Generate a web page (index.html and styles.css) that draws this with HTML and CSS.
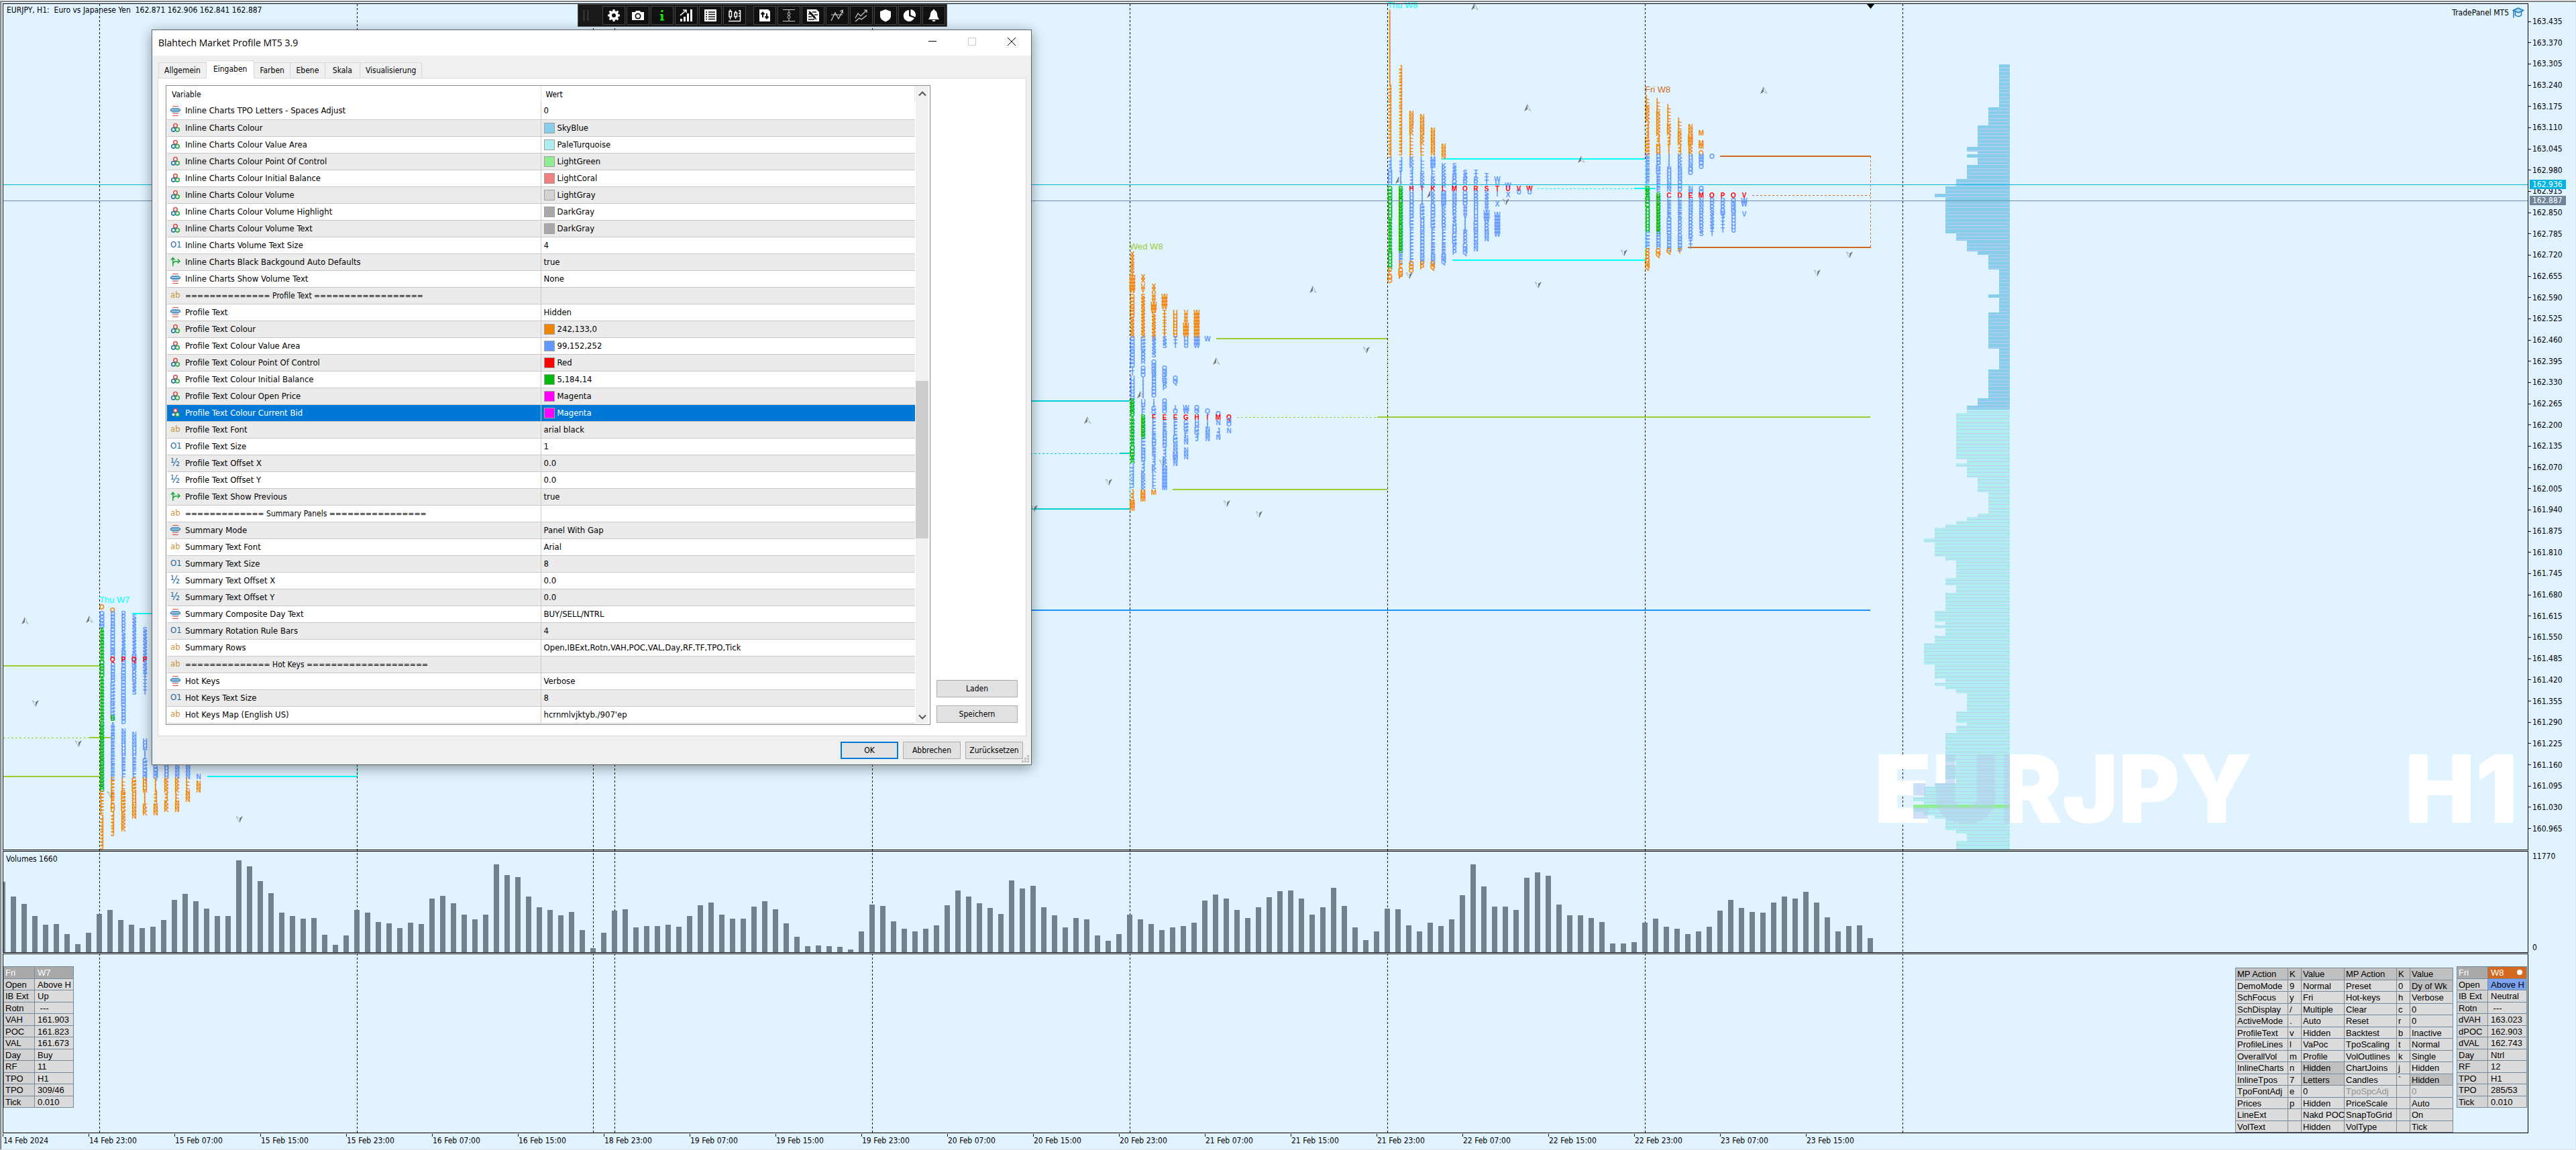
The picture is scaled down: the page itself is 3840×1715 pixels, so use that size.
FILE: index.html
```html
<!DOCTYPE html>
<html lang="de">
<head>
<meta charset="utf-8">
<title>EURJPY, H1</title>
<link rel="stylesheet" href="styles.css">
</head>
<body>
<svg class="defs" aria-hidden="true">
  <symbol id="i-enum" viewBox="0 0 14 14"><path d="M3 .5h8M3 10.5h8M3 13.5h8" stroke="#e0483e"/><path d="M2 3h10M2 8.500h10" stroke="#5b9fd0"/><rect x=".5" y="4.500" width="13" height="2.500" rx="1" fill="#bfe0f5" stroke="#0f5f9c"/></symbol>
  <symbol id="i-color" viewBox="0 0 14 14"><g fill="#fff" stroke-width="1.500"><circle cx="7" cy="4" r="2.600" stroke="#dd4b45"/><circle cx="4.200" cy="9.600" r="2.600" stroke="#1c6fae"/><circle cx="9.800" cy="9.600" r="2.600" stroke="#23a845"/></g></symbol>
  <symbol id="i-bool" viewBox="0 0 16 16"><path d="M4 15V1.500M1 5l3-3.500L7 5M4 12c0-4 3-5 11-5M11.500 3.500 15 7l-3.500 3.500" fill="none" stroke="#16a83a" stroke-width="1.500"/></symbol>
  <symbol id="i-up" viewBox="-7 -6 14 12" overflow="visible"><path d="M0-6-5 5 0 2z" fill="#777"/><path d="M0-5 5 4.500 1 2" fill="none" stroke="#aab4b8"/></symbol>
  <symbol id="i-down" viewBox="-7 -6 14 12" overflow="visible"><path d="M0 5 5-5 0-2z" fill="#777"/><path d="M0 4.500-5-4.500-1-2" fill="none" stroke="#aab4b8"/></symbol>
</svg>

<main class="terminal">
  <svg class="canvas" id="canvas" aria-hidden="true"></svg>

  <section class="pane price">
    <p class="symbol">EURJPY, H1:&nbsp; Euro vs Japanese Yen&nbsp; 162.871 162.906 162.841 162.887</p>
    <p class="expert">TradePanel MT5
      <svg width="18" height="18" viewBox="0 0 18 18" fill="none" stroke="#1a78bd" stroke-width="1.500"><path d="M9 2 1.500 5.500 9 9l7.500-3.500z" fill="#a8dbf7"/><path d="M4.500 7v5.500c3 2.500 6.500 2.500 9 0V7M2 6v10.500"/></svg>
    </p>
    <div class="watermark"><span>EURJPY</span><span>H1</span></div>
  </section>
  <div class="axis prices" id="prices">
    <span class="tag ask">162.936</span>
    <span class="tag bid">162.887</span>
  </div>

  <section class="pane volumes">
    <p class="caption">Volumes 1660</p>
    <div class="bars" id="bars"></div>
  </section>
  <div class="axis scale"><span>11770</span><span>0</span></div>

  <section class="pane summary">
    <table class="panel old">
      <tr><th>Fri</th><th>W7</th></tr>
      <tr><td>Open</td><td>Above H</td></tr>
      <tr><td>IB Ext</td><td>Up</td></tr>
      <tr><td>Rotn</td><td>&nbsp;---</td></tr>
      <tr><td>VAH</td><td>161.903</td></tr>
      <tr><td>POC</td><td>161.823</td></tr>
      <tr><td>VAL</td><td>161.673</td></tr>
      <tr><td>Day</td><td>Buy</td></tr>
      <tr><td>RF</td><td>11</td></tr>
      <tr><td>TPO</td><td>H1</td></tr>
      <tr><td>TPO</td><td>309/46</td></tr>
      <tr><td>Tick</td><td>0.010</td></tr>
    </table>
    <div class="right">
      <table class="panel keys">
        <tr><th>MP Action</th><th>K</th><th>Value</th><th>MP Action</th><th>K</th><th>Value</th></tr>
        <tr><td>DemoMode</td><td>9</td><td>Normal</td><td>Preset</td><td>0</td><td class="on">Dy of Wk</td></tr>
        <tr><td>SchFocus</td><td>y</td><td>Fri</td><td>Hot-keys</td><td>h</td><td>Verbose</td></tr>
        <tr><td>SchDisplay</td><td>/</td><td>Multiple</td><td>Clear</td><td>c</td><td>0</td></tr>
        <tr><td>ActiveMode</td><td>.</td><td>Auto</td><td>Reset</td><td>r</td><td>0</td></tr>
        <tr><td>ProfileText</td><td>v</td><td>Hidden</td><td>Backtest</td><td>b</td><td>Inactive</td></tr>
        <tr><td>ProfileLines</td><td>l</td><td>VaPoc</td><td>TpoScaling</td><td>t</td><td>Normal</td></tr>
        <tr><td>OverallVol</td><td>m</td><td>Profile</td><td>VolOutlines</td><td>k</td><td>Single</td></tr>
        <tr><td>InlineCharts</td><td>n</td><td class="on">Hidden</td><td>ChartJoins</td><td>j</td><td>Hidden</td></tr>
        <tr><td>InlineTpos</td><td>7</td><td class="on">Letters</td><td>Candles</td><td>`</td><td class="on">Hidden</td></tr>
        <tr><td>TpoFontAdj</td><td>e</td><td>0</td><td class="off">TpoSpcAdj</td><td></td><td class="off">0</td></tr>
        <tr><td>Prices</td><td>p</td><td>Hidden</td><td>PriceScale</td><td></td><td>Auto</td></tr>
        <tr><td>LineExt</td><td></td><td>Nakd POC</td><td>SnapToGrid</td><td></td><td>On</td></tr>
        <tr><td>VolText</td><td></td><td>Hidden</td><td>VolType</td><td></td><td>Tick</td></tr>
      </table>
      <table class="panel live">
        <tr><th>Fri</th><th class="hot">W8<i class="dot"></i></th></tr>
        <tr><td>Open</td><td class="above">Above H</td></tr>
        <tr><td>IB Ext</td><td>Neutral</td></tr>
        <tr><td>Rotn</td><td>&nbsp;---</td></tr>
        <tr><td>dVAH</td><td>163.023</td></tr>
        <tr><td>dPOC</td><td>162.903</td></tr>
        <tr><td>dVAL</td><td>162.743</td></tr>
        <tr><td>Day</td><td>Ntrl</td></tr>
        <tr><td>RF</td><td>12</td></tr>
        <tr><td>TPO</td><td>H1</td></tr>
        <tr><td>TPO</td><td>285/53</td></tr>
        <tr><td>Tick</td><td>0.010</td></tr>
      </table>
    </div>
  </section>

  <ol class="times" id="times"></ol>
</main>

<div class="toolbar" role="toolbar">
  <span class="handle"></span>
  <button aria-label="Einstellungen"><svg viewBox="0 0 20 20"><circle cx="10" cy="10" r="5" fill="none" stroke="#fff" stroke-width="4"/><path d="M10 1v18M1 10h18M3.600 3.600l12.800 12.800M16.400 3.600 3.600 16.400" stroke="#fff" stroke-width="3"/><circle cx="10" cy="10" r="3" fill="#111"/></svg></button>
  <button aria-label="Foto"><svg viewBox="0 0 20 20"><path d="M1 5h5l1-2h6l1 2h5v12H1z" fill="#fff"/><circle cx="10" cy="11" r="4.500" fill="#111"/><circle cx="10" cy="11" r="2.800" fill="#fff"/></svg></button>
  <button aria-label="Info"><svg viewBox="0 0 20 20"><path d="M8.500 2h3v3h-3zM7 8h4.500v8H13v1.500H7V16h1.500V9.500H7z" fill="#0f0"/></svg></button>
  <button aria-label="Statistik"><svg viewBox="0 0 20 20"><path d="M1 15h3v4H1zM6 12h3v7H6zM11 7h3v12h-3zM16 1h3v18h-3z" fill="#fff"/><path d="M1 10l8-7M5 2h5v4" fill="none" stroke="#fff" stroke-width="1.500"/></svg></button>
  <button aria-label="Liste"><svg viewBox="0 0 20 20"><path d="M1 1h18v18H1z" fill="#fff"/><path d="M3 5h2M7 5h10M3 8.500h2M7 8.500h10M3 12h2M7 12h10M3 15.500h2M7 15.500h10" stroke="#111" stroke-width="1.500"/></svg></button>
  <button aria-label="Kerzen"><svg viewBox="0 0 20 20" fill="none" stroke="#fff" stroke-width="1.500"><path d="M3.500 1v3M3.500 12v4M2 4h3.500v8H2zM11.500 3v3M11.500 12v3M10 6h3.500v6H10zM1 18.500h18M18.500 2v16M16 3h2M16 7h2M16 11h2"/></svg></button>
  <span class="split"></span>
  <button aria-label="Handel"><svg viewBox="0 0 20 20"><path d="M2 1h13l3 3v15H2z" fill="#fff"/><path d="M7 13V6M4.500 8.500 7 5.500l2.500 3M13 7v7M10.500 11.500l2.500 3 2.500-3" fill="none" stroke="#111" stroke-width="2"/></svg></button>
  <button aria-label="Abstand"><svg viewBox="0 0 20 20" fill="none" stroke="#ccc"><path d="M1 1.500h18M1 18.500h18M10 2v3M10 15v3"/><circle cx="10" cy="7.500" r="2"/><circle cx="10" cy="12.500" r="2"/></svg></button>
  <button aria-label="Notiz"><svg viewBox="0 0 20 20"><path d="M1 1h14l4 4v14H1z" fill="#fff"/><path d="M4 4l9 10 2 2M3 8h3M3 12h5M9 5h6M12 9h5M3 16h9" stroke="#111" stroke-width="1.500"/><path d="M5 5l8 9" stroke="#111" stroke-width="3"/></svg></button>
  <button aria-label="Trend"><svg viewBox="0 0 20 20" fill="none" stroke="#ccc" stroke-width="1.200"><path d="M1 18l6-12 5 9 6-12M14 4l4-2 .5 5M1 9h17"/></svg></button>
  <button aria-label="Trends"><svg viewBox="0 0 20 20" fill="none" stroke="#ccc" stroke-width="1.200"><path d="M1 14l4-7 4 4 9-9M14 2h4v4M1 19l6-5 3 2 8-6"/></svg></button>
  <button aria-label="Schutz"><svg viewBox="0 0 20 20"><path d="M10 1l8 3v7c0 4-4 7-8 8.500C6 18 2 15 2 11V4z" fill="#fff"/></svg></button>
  <button aria-label="Anteile"><svg viewBox="0 0 20 20" fill="#fff"><path d="M9 2a8.500 8.500 0 1 0 8 12L9 11z"/><path d="M11.500 1v8.500l7 3A8.500 8.500 0 0 0 11.500 1z"/></svg></button>
  <button aria-label="Alarm"><svg viewBox="0 0 20 20"><path d="M10 1c1 0 1.500.600 1.500 1.500C15 4 15 8 15.500 11.500L18 16H2l2.500-4.500C5 8 5 4 8.500 2.500 8.500 1.600 9 1 10 1zM7.500 17h5c-.500 3-4.500 3-5 0z" fill="#fff"/></svg></button>
</div>

<div class="dialog" role="dialog" aria-labelledby="dlg-title">
  <header class="titlebar">
    <h1 id="dlg-title">Blahtech Market Profile MT5 3.9</h1>
    <button aria-label="Minimieren"><svg viewBox="0 0 14 14"><path d="M1 6.500h12"/></svg></button>
    <button aria-label="Maximieren" disabled><svg viewBox="0 0 14 14"><path d="M1.500 1.500h11v11h-11z"/></svg></button>
    <button aria-label="Schliessen"><svg viewBox="0 0 14 14"><path d="M1 1l12 12M13 1 1 13"/></svg></button>
  </header>
  <div class="tabs" role="tablist">
    <button role="tab">Allgemein</button>
    <button role="tab" aria-selected="true">Eingaben</button>
    <button role="tab">Farben</button>
    <button role="tab">Ebene</button>
    <button role="tab">Skala</button>
    <button role="tab">Visualisierung</button>
  </div>
  <div class="sheet">
    <div class="list">
      <table class="inputs">
        <thead><tr><th>Variable</th><th>Wert</th></tr></thead>
        <tbody id="inputs"></tbody>
      </table>
      <div class="scroll">
        <svg viewBox="0 0 12 8"><path d="M1 6.500 6 1.500l5 5"/></svg>
        <span class="thumb"></span>
        <svg viewBox="0 0 12 8"><path d="M1 1.500 6 6.500l5-5"/></svg>
      </div>
    </div>
    <div class="side">
      <button class="btn">Laden</button>
      <button class="btn">Speichern</button>
    </div>
  </div>
  <footer class="actions">
    <button class="btn default">OK</button>
    <button class="btn">Abbrechen</button>
    <button class="btn">Zurücksetzen</button>
    <svg class="grip" viewBox="0 0 12 12" fill="#bfbfbf"><path d="M8 0h3v3H8zM4 4h3v3H4zM8 4h3v3H8zM0 8h3v3H0zM4 8h3v3H4zM8 8h3v3H8z"/></svg>
  </footer>
</div>
<script src="script.js"></script>
</body>
</html>
```
FILE: styles.css
```css
* { box-sizing: border-box; }
body {
  margin: 0;
  background: #e0f3ff;
  color: #000;
  font-family: "DejaVu Sans Condensed", "Noto Sans", sans-serif;
  font-size: 12px;
  line-height: 16px;
}
p, ol, h1 { margin: 0; padding: 0; }
button { font: inherit; color: inherit; padding: 0; }
.defs { position: absolute; width: 0; height: 0; }

/* chart window */
.terminal {
  position: relative;
  display: grid;
  grid-template-columns: minmax(0, 1fr) 71px;
  grid-template-rows: minmax(1200px, 1fr) 152px 268px 23px;
  row-gap: 1px;
  min-height: 100vh;
  padding: 4px 0 0 4px;
  border-top: 1px solid #f0f0f0;
  border-bottom: 1px solid #e3e3e3;
  box-shadow: inset 1px 1px #a0a0a0, inset 2px 2px #696969, inset -1px 0 #e3e3e3;
}
.canvas { position: absolute; top: -1px; left: 0; width: calc(100% - 71px); height: calc(100% - 23px); }
.pane { position: relative; border: 1px solid #000; overflow: hidden; }
.symbol { padding: 1px 5px; }
.price { display: flex; justify-content: space-between; align-items: flex-start; }
.expert { display: flex; align-items: center; gap: 5px; padding: 4px 5px; }
.watermark {
  position: absolute;
  right: 0;
  bottom: 16px;
  width: 984px;
  padding: 0 15px 0 10px;
  display: flex;
  justify-content: space-between;
  font: 900 140px/150px Inter, sans-serif;
  color: transparent;
  --white: linear-gradient(#fff, #fff);
  --tint: linear-gradient(rgba(180, 200, 235, .45), rgba(180, 200, 235, .45));
  /* the letters take a tint where they cross the composite profile */
  background:
    var(--white) 0 0 / 68px 100%,
    var(--white) 68px 0 / 48px 67px,
    var(--tint) 68px 67px / 48px 53px,
    var(--white) 68px 120px / 48px 30px,
    var(--tint) 116px 0 / 96px 100%,
    var(--white) 212px 0 / 772px 100%;
  background-repeat: no-repeat;
  -webkit-background-clip: text;
  background-clip: text;
}
.axis { position: relative; display: flex; flex-direction: column; justify-content: space-between; }
.prices { padding: 19px 0 24px; }
.price-label { display: flex; align-items: center; gap: 2px; }
.price-label::before { content: ""; width: 4px; height: 1px; background: #000; }
.tag { position: absolute; left: 2px; width: 54px; padding-left: 4px; line-height: 14px; color: #fff; }
.ask { top: 263px; background: #00b4e1; }
.bid { top: 287px; background: #708599; }
.scale { padding: 0 6px; }
.caption { padding: 3px 4px; }
.bars { position: absolute; inset: auto 0 0 -5px; display: flex; align-items: flex-end; gap: 8px; }
.bars i { flex: none; width: 8px; background: #708090; }
.times { grid-column: 1 / -1; display: flex; list-style: none; }
.times li { flex: none; width: 128px; border-left: 1px solid #000; height: 4px; white-space: nowrap; }
.times span { display: block; padding-top: 2px; }

/* summary panels */
.summary { grid-column: 1; display: flex; justify-content: space-between; align-items: flex-start; padding: 18px 0 0; }
.right { display: flex; gap: 5px; align-items: flex-start; padding-right: 1px; }
.panel { border-collapse: collapse; table-layout: fixed; font: 13px/15px "Liberation Sans", Arial, sans-serif; }
.panel td, .panel th { height: 18px; padding: 0 0 0 4px; border: 1px solid #778899; text-align: left; font-weight: 400; background: #dcdcdc; white-space: nowrap; }
.panel tr:nth-child(even) > * { height: 17px; }
.old, .live { width: 105px; }
.old th, .live th { background: #a9a9a9; color: #fff; width: 58px; }
.old th:first-child, .live th:first-child { width: 46px; padding-left: 2px; }
.old td:first-child, .live td:first-child { padding-left: 2px; background: #d3d3d3; }
.live th.hot { background: #d2691e; }
.dot { float: right; width: 8px; height: 8px; margin: 3px 6px; border-radius: 50%; background: #fff; }
.live .above { background: #7ba3f0; }
.keys { width: 325px; margin-top: 2px; }
.keys td, .keys th { padding-left: 2px; }
.keys th { background: #c0c0c0; }
.keys th:nth-child(3n+1) { width: 78px; }
.keys th:nth-child(3n+2) { width: 20px; }
.keys th:nth-child(3n) { width: 64px; }
.keys .on { background: #c0c0c0; }
.keys .off { color: #909090; }

/* toolbar */
.toolbar { position: absolute; left: 861px; top: 6px; display: flex; align-items: center; gap: 2px; height: 34px; padding: 0 2px; background: #1a1a1a; border: 1px solid #555; }
.toolbar button { width: 34px; height: 28px; background: #111; border: 1px solid #444; display: grid; place-items: center; }
.toolbar svg { width: 20px; height: 20px; }
.handle { width: 7px; height: 16px; margin: 0 19px 0 6px; border: solid #555; border-width: 0 1px; }
.split { width: 7px; }

/* dialog */
.dialog { position: absolute; left: 226px; top: 44px; width: 1312px; background: #f0f0f0; border: 1px solid #5f6468; box-shadow: 0 4px 18px rgba(0, 0, 0, .4); }
.titlebar { display: flex; align-items: center; height: 38px; padding-left: 9px; background: #fff; }
.titlebar h1 { flex: 1; font: 400 14px/20px "Open Sans", "Noto Sans", sans-serif; }
.titlebar button { width: 59px; height: 38px; background: none; border: 0; }
.titlebar svg { width: 14px; height: 14px; fill: none; stroke: #000; }
.titlebar button:disabled svg { stroke: #c8c8c8; }
.tabs { display: flex; align-items: flex-end; height: 33px; padding: 0 9px; position: relative; }
.tabs button { height: 23px; min-width: 52px; padding: 0 8px; background: #f0f0f0; border: 1px solid #d9d9d9; border-width: 1px 1px 0 0; }
.tabs button:first-child { border-left-width: 1px; }
.tabs button[aria-selected] { height: 27px; padding: 0 10px 3px; margin-bottom: -1px; background: #fff; }
.sheet { display: flex; justify-content: space-between; margin: 0 7px 0 8px; padding: 10px 12px 16px 11px; background: #fff; border: 1px solid #d9d9d9; }
.list { display: flex; width: 1140px; border: 1px solid #828790; padding: 0 2px 1px 1px; }
.inputs { flex: 1; border-collapse: collapse; table-layout: fixed; font-size: 13px; }
.inputs th, .inputs td { height: 25px; padding: 0 0 0 5px; text-align: left; font-weight: 400; border-right: 1px solid #c8c8c8; border-bottom: 1px solid #c8c8c8; white-space: nowrap; }
.inputs th { border-bottom: 0; border-right-color: #e5e5e5; padding-left: 7px; font-size: 12px; }
.inputs th:first-child { width: 557px; }
.inputs td:last-child { border-right: 0; padding-left: 4px; }
.inputs tr:nth-child(even) td { background: #ebebeb; }
.inputs tr.selected td { background: #0078d7; color: #fff; }
.inputs tr.heading { font-size: 12px; }
.cell { display: flex; align-items: center; gap: 7px; }
.cell svg, .cell .glyph { flex: none; width: 15px; height: 15px; }
.glyph { font-size: 13px; line-height: 14px; color: #1464a0; }
.glyph.ab { color: #c8963c; }
.glyph.half { font-size: 16px; }
.value { display: flex; align-items: center; gap: 4px; }
.swatch { width: 16px; height: 16px; border: 1px solid #a0a0a0; }
.scroll { display: flex; flex-direction: column; align-items: center; width: 19px; margin-left: 1px; padding: 8px 0 6px; background: #f0f0f0; }
.scroll svg { width: 12px; height: 8px; fill: none; stroke: #555; stroke-width: 2; }
.thumb { width: 19px; height: 235px; margin: 424px 0 auto; background: #cdcdcd; }
.side { display: flex; flex-direction: column; justify-content: flex-end; gap: 12px; width: 121px; padding-bottom: 3px; }
.btn { height: 26px; background: #e1e1e1; border: 1px solid #adadad; }
.actions { position: relative; display: flex; justify-content: flex-end; gap: 7px; padding: 8px 12px; }
.actions .btn { width: 86px; white-space: nowrap; }
.actions .default { border: 2px solid #0078d7; }
.grip { position: absolute; right: 2px; bottom: 2px; width: 12px; height: 12px; }

/* chart drawing */
.sep { stroke: #000; stroke-dasharray: 3 3; }
.dash { stroke-dasharray: 3 3; }
.day { font: 13px "Liberation Sans", Arial, sans-serif; }
.tpo { font: 700 10px "Liberation Sans", Arial, sans-serif; text-anchor: middle; }
```
FILE: script.js
```js
const NS = 'http://www.w3.org/2000/svg';
const canvas = document.getElementById('canvas');
function draw(tag, attrs, text) {
  const el = document.createElementNS(NS, tag);
  for (const k in attrs) el.setAttribute(k, attrs[k]);
  if (text) el.textContent = text;
  canvas.appendChild(el);
  return el;
}
function line(x1, y1, x2, y2, stroke, cls, w) {
  draw('line', { x1, y1, x2, y2, stroke, class: cls || '', 'stroke-width': w || 1 });
}

/* day separators */
[148, 532, 884, 916, 1300, 1684, 2068, 2452, 2836].forEach(x =>
  draw('line', { x1: x + .5, x2: x + .5, y1: 6, y2: '100%', class: 'sep' }));

/* value area and point of control lines: y, x1, x2, colour, dashed */
const YG = '#9acd32', DC = '#00ced1', CY = '#00ffff', CH = '#d2691e';
[[993,5,148,YG],[1158,5,148,YG],[1100,5,133,YG,1],[1100,133,165,YG],
 [915,197,532,CY],[1158,309,532,CY],
 [598,1500,1684,DC],[759,1500,1684,DC],[676,1500,1669,DC,1],[676,1669,1684,DC],
 [910,1500,2788,'#1e90ff'],
 [505,1813,2068,YG],[730,1748,2068,YG],[622,1844,2053,YG,1],[622,2053,2788,YG],
 [237,2149,2452,CY],[388,2165,2452,CY],[281,2292,2436,CY,1],[281,2436,2468,CY],
 [233,2564,2789,CH],[369,2516,2789,CH],[291,2612,2788,CH,1]
].forEach(([y, a, b, c, d]) => d ? line(a, y + .5, b, y + .5, c, 'dash') : line(a, y, b, y, c, '', 2));
line(2788.5, 233, 2788.5, 369, CH, 'dash');
line(2068.5, 508, 2068.5, 730, YG, 'dash');
line(2452.5, 240, 2452.5, 388, CY, 'dash');
line(532.5, 915, 532.5, 1158, CY, 'dash');
line(1684.5, 601, 1684.5, 759, DC, 'dash');

/* fractal arrows */
const arrow = (id, list) => list.forEach(([x, y]) => draw('use', { href: '#' + id, x: x - 7, y: y - 6, width: 14, height: 12 }));
arrow('i-up', [[37,926],[133,924],[1621,627],[1700,589],[1813,539],[1957,432],[2198,10],[2277,161],[2357,238],[2629,135],[2085,269],[2132,290]]);
arrow('i-down', [[53,1049],[117,1109],[165,1185],[357,1222],[1653,719],[1733,690],[1829,751],[1877,767],[2037,522],[2101,411],[1542,758],[2245,301],[2293,425],[2421,377],[2709,407],[2757,380]]);

/* day profiles: per column "colour top bottom letters" */
const COLORS = { o: '#f28500', b: '#6398fc', g: '#05b80e', r: '#ff0000' };
const STEP = 4.87;
function profile(cx, columns) {
  columns.forEach((col, i) => col.split(',').forEach(seg => {
    const [c, top, bottom, letters] = seg.trim().split(' ');
    const rows = Math.max(1, Math.round((bottom - top - 8) / STEP) + 1);
    const t = draw('text', { class: 'tpo', fill: COLORS[c] });
    for (let r = 0; r < rows; r++) {
      const s = document.createElementNS(NS, 'tspan');
      s.setAttribute('x', cx + i * 16);
      s.setAttribute('y', Math.round(+top + 8 + r * STEP));
      s.textContent = letters[Math.floor(r * letters.length / rows)];
      t.appendChild(s);
    }
  }));
}
profile(152, [
  'o 901 911 O,b 911 937 O,g 935 1077 AAOAAA,g 1076 1182 B,o 1179 1215 F,o 1215 1265 J',
  'o 906 915 O,b 911 980 DDOOQO,b 987 1075 DGG,r 979 987 Q,g 1067 1075 B,b 1077 1162 AEEEE,o 1159 1213 FFEFD,o 1210 1245 J',
  'b 911 1080 PSDOOD,r 979 987 P,b 1086 1162 NHEF,o 1159 1240 LGGKK',
  'b 916 1036 SSSQRS,r 979 987 Q,b 1091 1162 NHEF,o 1159 1221 GHN',
  'b 935 1036 SST,r 979 987 P,b 1101 1162 HIGQ,o 1159 1216 HIK',
  'b 1105 1162 HGQ,o 1159 1216 IJN',
  'b 1110 1162 IH,o 1159 1211 KJK',
  'b 1115 1162 IN,o 1159 1211 KLN',
  'b 1120 1162 HN,o 1159 1196 LN',
  'b 1154 1162 N,o 1164 1182 N']);
profile(1688, [
  'o 375 410 X,o 410 438 W,o 438 505 OS,b 501 547 O,b 547 560 T,b 560 595 U,g 594 620 B,g 620 692 AAAOA,b 691 730 J,o 730 763 JM',
  'o 409 423 X,o 423 438 V,o 438 505 S,b 501 542 GR,b 545 562 O,b 562 595 I,b 595 618 UF,g 618 656 B,b 652 733 CDDJKKK,o 730 748 M',
  'o 423 435 X,o 435 465 VW,o 465 505 S,b 501 533 S,b 536 595 QDO,b 595 617 IG,r 618 626 F,b 624 730 FEDEJKLL,o 730 738 M',
  'o 438 462 W,o 462 505 T,b 501 518 S,b 545 582 QGP,b 594 618 QO,r 618 626 E,b 626 733 EDDJKMMM',
  'o 462 505 U,b 501 518 T,b 560 575 Q,b 604 618 IO,r 618 626 E,b 624 694 FFGNMN',
  'o 462 505 VW,b 501 518 U,b 604 618 W,r 618 626 G,b 626 664 GFN,b 667 684 N',
  'o 462 505 W,b 501 518 W,b 604 618 Q,r 618 626 H,b 626 660 HGJ',
  'b 501 509 W,b 609 618 Q,r 618 626 I,b 626 660 INN',
  'b 613 618 O,r 618 626 M,b 626 636 N,b 638 656 JN',
  'r 618 626 Q,b 623 636 O,b 638 646 N']);
profile(2072, [
  'o 14 234 IIIIJJJJ,b 234 278 JJHH,g 277 402 OHAAH,o 399 422 FO',
  'o 97 234 J,b 234 278 JI,g 277 378 B,b 375 392 E,o 389 417 FOP',
  'o 165 234 NKLL,b 233 278 KJJ,r 277 285 H,b 284 392 HDCFFF,o 389 407 O',
  'o 170 234 NNKL,b 233 278 LK,r 277 285 I,b 284 392 IGHDDD,o 389 402 P',
  'o 190 234 N,b 233 278 MLK,r 277 285 K,b 284 392 KOGFED,o 389 404 Q',
  'o 214 238 N,b 243 278 KR,r 277 285 L,b 284 394 MKRFEQ',
  'b 243 278 SRO,r 277 285 M,b 284 378 NRSHGP',
  'b 253 278 SR,r 277 285 O,b 284 380 OVIPQ',
  'b 253 278 TR,r 277 285 R,b 284 373 RHUODN',
  'b 258 278 T,r 277 285 S,b 284 358 SVWRN',
  'b 263 278 WU,r 277 285 T,b 285 294 I,b 300 309 X,b 316 353 W',
  'b 272 280 W,r 277 285 U,b 286 296 X',
  'r 277 285 V,b 282 290 U',
  'r 277 285 W,b 282 290 U']);
profile(2456, [
  'o 141 232 LKKJJGG,b 229 278 E,g 277 350 BOHHH,b 345 373 C,o 370 403 RQ',
  'o 146 232 LKKJH,b 229 288 DGEE,g 287 348 B,b 345 373 D,o 370 385 Q',
  'o 155 232 LLKJI,b 229 288 IHN,r 287 295 C,b 294 373 EOD,o 370 380 Q',
  'o 175 232 LKJ,b 229 288 KND,r 287 295 D,b 294 373 EPD,o 370 378 T',
  'o 185 232 NMK,b 229 260 HNO,b 277 288 N,r 287 295 E,b 295 369 NRRT',
  'o 194 202 M,o 209 222 M,o 224 232 O,b 229 251 MO,b 277 288 O,r 287 295 M,b 295 353 NRRS',
  'b 229 237 O,r 287 295 O,b 295 353 RSST',
  'r 287 295 P,b 295 349 RQTT',
  'r 287 295 Q,b 295 349 QUU',
  'r 287 295 V,b 295 310 W,b 315 324 V']);
[['Thu W7',148,899,CY],['Wed W8',1684,372,YG],['Thu W8',2068,12,CY],['Fri W8',2452,138,CH]].forEach(([t, x, y, fill]) =>
  draw('text', { class: 'day', x, y, fill }, t));

/* composite profile: top, width in steps of 16 */
const steps = [[96,1],[160,2],[187,3],[219,4],[226,3],[230,4],[235,3],[246,4],[267,5],[278,6],[289,7],[294,6],[348,5],[359,4],[375,3],[380,2],[402,1],[439,2],[444,1],[466,2],[520,1],[551,2],[594,3],[605,4],[611,4],[616,5],[685,4],[691,5],[696,4],[712,3],[734,2],[766,3],[771,4],[777,5],[782,6],[787,7],[803,8],[809,7],[830,6],[836,5],[862,6],[873,5],[884,6],[911,7],[927,6],[932,7],[937,6],[948,7],[959,8],[991,7],[1012,6],[1018,7],[1023,6],[1028,5],[1034,4],[1061,5],[1078,4],[1082,5],[1093,6],[1136,5],[1141,6],[1162,5],[1168,7],[1173,8],[1189,9],[1195,8],[1200,9],[1205,9],[1211,8],[1216,7],[1221,6],[1238,5],[1243,4],[1254,5],[1267,0]];
const widthAt = y => { let w = 1; for (const [t, n] of steps) { if (y >= t) w = n; } return w * 16; };
steps.slice(0, -1).forEach(([y, n], i) =>
  draw('rect', { x: 2996 - n * 16, y, width: n * 16, height: steps[i + 1][0] - y, fill: y === 1200 ? '#90ee90' : y < 611 ? '#87ceeb' : '#afeeee' }));
for (let y = 101; y < 1266; y += 5.34) {
  const r = Math.round(y), w = Math.min(widthAt(r - 1), widthAt(r + 1));
  if (r < 1199 || r > 1204) draw('rect', { x: 2996 - w, y: r, width: w, height: 1, fill: '#c3cbf5' });
}

/* current prices */
line(5, 275.5, 3768, 275.5, '#00b4e1');
line(5, 299.5, 3768, 299.5, '#708fae');
draw('path', { d: 'M2782 5h13l-6.500 8z', fill: '#000' });

/* price scale */
const prices = document.getElementById('prices');
for (let i = 0; i < 39; i++) {
  const s = document.createElement('span');
  s.className = 'price-label';
  s.textContent = (163.435 - i * .065).toFixed(3);
  prices.insertBefore(s, prices.querySelector('.tag'));
}

/* volume bars */
const vol = [105,83,72,54,41,42,27,12,29,57,63,48,41,36,38,48,78,87,76,65,54,54,137,128,106,88,59,54,50,51,26,11,25,63,59,45,43,36,44,42,80,84,73,56,49,56,131,115,112,83,67,63,55,60,33,6,29,62,64,37,39,39,41,38,54,70,74,56,50,50,68,76,64,43,23,9,10,9,8,4,31,71,69,46,35,31,35,40,70,92,83,73,66,57,107,95,99,67,55,37,51,49,25,17,27,56,49,42,33,37,39,44,77,86,80,63,51,67,82,91,92,80,56,67,96,69,37,18,31,65,64,40,31,44,39,49,85,131,98,68,68,63,111,119,114,71,55,55,51,45,13,13,15,44,50,38,35,27,31,38,62,78,66,60,59,74,83,80,90,74,52,31,39,40,21];
document.getElementById('bars').innerHTML = vol.map(h => `<i style="height:${h}px"></i>`).join('');

/* time scale */
const times = ['14 Feb 2024','14 Feb 23:00','15 Feb 07:00','15 Feb 15:00','15 Feb 23:00','16 Feb 07:00','16 Feb 15:00','18 Feb 23:00','19 Feb 07:00','19 Feb 15:00','19 Feb 23:00','20 Feb 07:00','20 Feb 15:00','20 Feb 23:00','21 Feb 07:00','21 Feb 15:00','21 Feb 23:00','22 Feb 07:00','22 Feb 15:00','22 Feb 23:00','23 Feb 07:00','23 Feb 15:00'];
document.getElementById('times').innerHTML = times.map(t => `<li><span>${t}</span></li>`).join('');

/* indicator inputs: type, name, value, swatch */
const eq = n => '='.repeat(n);
const inputs = [
  ['enum','Inline Charts TPO Letters - Spaces Adjust','0'],
  ['color','Inline Charts Colour','SkyBlue','#87ceeb'],
  ['color','Inline Charts Colour Value Area','PaleTurquoise','#afeeee'],
  ['color','Inline Charts Colour Point Of Control','LightGreen','#90ee90'],
  ['color','Inline Charts Colour Initial Balance','LightCoral','#f08080'],
  ['color','Inline Charts Colour Volume','LightGray','#d3d3d3'],
  ['color','Inline Charts Colour Volume Highlight','DarkGray','#a9a9a9'],
  ['color','Inline Charts Colour Volume Text','DarkGray','#a9a9a9'],
  ['O1','Inline Charts Volume Text Size','4'],
  ['bool','Inline Charts Black Backgound Auto Defaults','true'],
  ['enum','Inline Charts Show Volume Text','None'],
  ['ab',eq(14) + ' Profile Text ' + eq(18),''],
  ['enum','Profile Text','Hidden'],
  ['color','Profile Text Colour','242,133,0','#f28500'],
  ['color','Profile Text Colour Value Area','99,152,252','#6398fc'],
  ['color','Profile Text Colour Point Of Control','Red','#f00'],
  ['color','Profile Text Colour Initial Balance','5,184,14','#05b80e'],
  ['color','Profile Text Colour Open Price','Magenta','#f0f'],
  ['color','Profile Text Colour Current Bid','Magenta','#f0f'],
  ['ab','Profile Text Font','arial black'],
  ['O1','Profile Text Size','1'],
  ['half','Profile Text Offset X','0.0'],
  ['half','Profile Text Offset Y','0.0'],
  ['bool','Profile Text Show Previous','true'],
  ['ab',eq(13) + ' Summary Panels ' + eq(16),''],
  ['enum','Summary Mode','Panel With Gap'],
  ['ab','Summary Text Font','Arial'],
  ['O1','Summary Text Size','8'],
  ['half','Summary Text Offset X','0.0'],
  ['half','Summary Text Offset Y','0.0'],
  ['enum','Summary Composite Day Text','BUY/SELL/NTRL'],
  ['O1','Summary Rotation Rule Bars','4'],
  ['ab','Summary Rows','Open,IBExt,Rotn,VAH,POC,VAL,Day,RF,TF,TPO,Tick'],
  ['ab',eq(14) + ' Hot Keys ' + eq(20),''],
  ['enum','Hot Keys','Verbose'],
  ['O1','Hot Keys Text Size','8'],
  ['ab','Hot Keys Map (English US)',"hcrnmlvjktyb./907'ep"]
];
document.getElementById('inputs').innerHTML = inputs.map(([type, name, value, colour], i) => {
  const icon = ['enum','color','bool'].includes(type)
    ? `<svg><use href="#i-${type}"/></svg>`
    : `<span class="glyph ${type}">${type === 'half' ? '½' : type}</span>`;
  const swatch = colour ? `<i class="swatch" style="background:${colour}"></i>` : '';
  const cls = i === 18 ? ' class="selected"' : name[0] === '=' ? ' class="heading"' : '';
  return `<tr${cls}><td><div class="cell">${icon}${name}</div></td><td><div class="value">${swatch}${value}</div></td></tr>`;
}).join('');
```
